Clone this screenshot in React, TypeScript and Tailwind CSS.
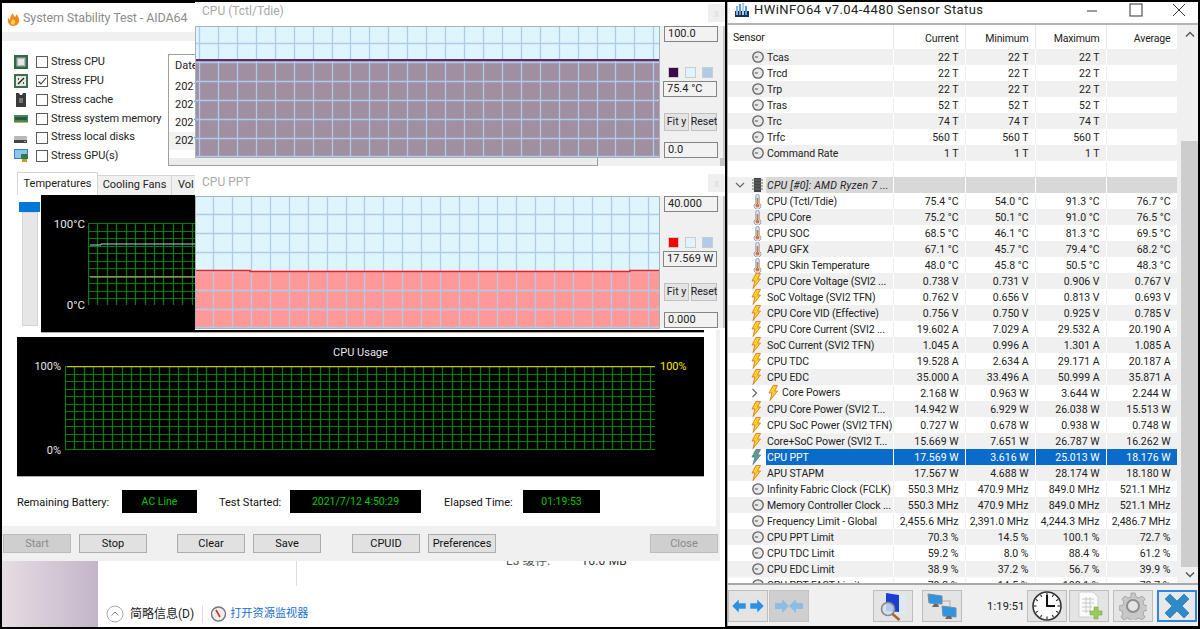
import React from "react";

const range = (n: number) => Array.from({ length: n }, (_, i) => i);

function GreenGrid({ w, h, yellow, children }: { w: number; h: number; yellow?: boolean; children?: React.ReactNode }) {
  const cols = Math.floor(w / 9.43);
  return (
    <svg width={w} height={h + 1} className="block shrink-0">
      {range(cols + 1).map((i) => (
        <line key={"v" + i} x1={Math.round(i * 9.43) + 0.5} x2={Math.round(i * 9.43) + 0.5} y1={0} y2={h} stroke="#008200" strokeWidth={1.2} />
      ))}
      {range(12).map((i) => (
        <line key={"h" + i} x1={0} x2={w} y1={Math.round(i * 7.5) + 0.5} y2={Math.round(i * 7.5) + 0.5} stroke="#008200" strokeWidth={1.2} />
      ))}
      {yellow && <line x1={2} x2={w} y1={0.5} y2={0.5} stroke="#c8c800" strokeWidth={1.6} />}
      {children}
    </svg>
  );
}

function BlueGrid({ h, startX, startY, level, line, fill, step }: { h: number; startX: number; startY: number; level: number; line: string; fill: string; step?: boolean }) {
  const w = 465;
  return (
    <svg width={w} height={h} className="block shrink-0">
      <rect width={w} height={h} fill="#dff5fe" />
      <rect y={level} width={w} height={h - level} fill={fill} />
      {range(25).map((i) => (
        <line key={"v" + i} x1={startX + Math.round(i * 18.93) + 0.5} x2={startX + Math.round(i * 18.93) + 0.5} y1={0} y2={h} stroke="#aecbea" strokeWidth={1.3} />
      ))}
      {range(7).map((i) => (
        <line key={"h" + i} x1={0} x2={w} y1={startY + Math.round(i * 18.9) + 0.5} y2={startY + Math.round(i * 18.9) + 0.5} stroke="#aecbea" strokeWidth={1.3} />
      ))}
      {step ? (
        <path d={`M0 ${level - 0.5}H55V${level + 0.5}H${w - 30}V${level - 0.5}H${w}`} fill="none" stroke={line} strokeWidth={1.4} />
      ) : (
        <line x1={0} x2={w} y1={level} y2={level} stroke={line} strokeWidth={2} />
      )}
      <rect x={0.5} y={0.5} width={w - 1} height={h - 1} fill="none" stroke="#a9b2b8" />
    </svg>
  );
}

function Field({ text, shift }: { text: string; shift?: boolean }) {
  return (
    <div className={`h-[16px] w-[54px] border border-[#858585] bg-[#f2f2f2] pl-[3px] text-[11px] leading-[14px] text-[#222] ${shift ? "ml-[3px]" : "ml-[4px]"}`}>
      {text}
    </div>
  );
}

function GraphWindow({ top, height, head, headPb, title, swatch, hi, value, lo, btnTop, children }: {
  top: string; height: string; head: string; headPb: string; title: string; swatch: string; hi: string; value: string; lo: string; btnTop: string; children: React.ReactNode;
}) {
  return (
    <section className={`absolute left-[195px] w-[530px] bg-white ${top} ${height}`}>
      <div className={`flex items-center pl-[7px] text-[12px] text-[#a8a8a8] ${head} ${headPb}`}>{title}</div>
      <div className={`absolute right-0 flex h-[18px] w-[17px] items-center justify-center bg-[#efefef] text-[10px] text-[#dcdcdc] ${btnTop}`}>x</div>
      <div className="flex">
        {children}
        <div className="flex h-[132px] flex-1 flex-col border-r-2 border-[#c8c8c8] bg-[#f0f0f0]">
          <Field text={hi} />
          <div className="ml-[8px] mt-[25px] flex gap-[6px]">
            <span className={`h-[11px] w-[11px] border border-[#ccc] ${swatch}`} />
            <span className="h-[11px] w-[11px] border border-[#ccc] bg-[#dff5fe]" />
            <span className="h-[11px] w-[11px] border border-[#ccc] bg-[#aecbea]" />
          </div>
          <div className="mt-[3px]"><Field text={value} shift /></div>
          <div className="ml-[4px] mt-[16px] flex gap-[2px] text-[10.5px] text-[#222]">
            <span className="flex h-[18px] w-[25px] items-center justify-center border border-[#c0c0c0] bg-[#e4e4e4]">Fit y</span>
            <span className="flex h-[18px] w-[26px] items-center justify-center border border-[#c0c0c0] bg-[#e4e4e4]">Reset</span>
          </div>
          <div className="mt-[11px]"><Field text={lo} /></div>
        </div>
      </div>
    </section>
  );
}

const Flame = () => (
  <svg width="15" height="16" viewBox="0 0 15 16" className="shrink-0">
    <path d="M2 7l2 2c0-3 1-5 3-7 0 2 1 3 2 4l2-3c1 3 3 5 2 8-1 3-4 4-6 4-3 0-6-3-5-8z" fill="#f08a1c" />
    <path d="M5 12c0-2 1-3 2-4 1 1 3 2 2 4-1 2-4 2-4 0z" fill="#ffd65a" />
  </svg>
);

const stressIcons: React.ReactNode[] = [
  <svg width="14" height="14" viewBox="0 0 14 14" key="a"><rect width="14" height="14" fill="#2f6a48" /><rect x="2.5" y="2.5" width="9" height="9" fill="#b5b5b5" /><rect x="4" y="4" width="6" height="6" fill="#e8e8e8" /></svg>,
  <svg width="14" height="14" viewBox="0 0 14 14" key="b"><rect width="14" height="14" fill="#3c7050" /><rect x="2" y="2" width="10" height="10" fill="#e8e8e0" /><path d="M4 10l6-6M4 5h1M9 9h1" stroke="#222" strokeWidth="1.4" /></svg>,
  <svg width="14" height="14" viewBox="0 0 14 14" key="c"><path d="M2 0h3l1 2h2l1-2h3v14H2z" fill="#3a3a3a" /><rect x="5" y="5" width="4" height="5" fill="#777" /></svg>,
  <svg width="14" height="14" viewBox="0 0 14 14" key="d"><rect y="3" width="14" height="8" fill="#3f8a5a" /><path d="M2 5v3M4 5v3M6 5v3M8 5v3M10 5v3M12 5v3" stroke="#222" /><rect y="10" width="14" height="1" fill="#c8b45a" /></svg>,
  <svg width="14" height="14" viewBox="0 0 14 14" key="e"><rect y="5" width="13" height="4" rx="1" fill="#b8b8b8" /><rect y="9" width="13" height="3" fill="#444" /><rect x="10" y="10" width="2" height="1" fill="#7c7" /></svg>,
  <svg width="15" height="14" viewBox="0 0 15 14" key="f"><rect width="14" height="10" fill="#3b7fc9" /><rect x="1" y="1" width="12" height="8" fill="#8cc4ee" /><rect x="7" y="5" width="7" height="5" fill="#2e7d43" /><rect x="8" y="10" width="5" height="3" fill="#c99a2e" /></svg>,
];

function Stress({ idx, label, checked }: { idx: number; label: string; checked?: boolean }) {
  return (
    <div className="flex h-[18.8px] items-center">
      <span className="flex w-[22px] shrink-0">{stressIcons[idx]}</span>
      <span className="flex h-[12px] w-[12px] shrink-0 items-center justify-center border border-[#5a5a5a] bg-white">
        {checked && (
          <svg width="10" height="10" viewBox="0 0 10 10"><path d="M1.5 5.5l2.5 2.5 5-6" fill="none" stroke="#333" strokeWidth="1.1" /></svg>
        )}
      </span>
      <span className="ml-[3px] whitespace-nowrap text-[11px] tracking-[-0.1px] text-[#222]">{label}</span>
    </div>
  );
}

function Btn({ label, off, cls }: { label: string; off?: boolean; cls?: string }) {
  return (
    <div className={`flex h-[19px] w-[68px] items-center justify-center border pt-[2px] text-[11px] ${off ? "border-[#bcbcbc] bg-[#cfcfcf] text-[#8a8a8a]" : "border-[#adadad] bg-[#e1e1e1] text-[#111]"} ${cls ?? ""}`}>
      {label}
    </div>
  );
}

function Led({ text, w }: { text: string; w: string }) {
  return <div className={`flex h-[23px] items-center justify-center bg-black text-[10.5px] text-[#00c800] ${w}`}>{text}</div>;
}

const Clock = () => (
  <svg width="12" height="12" viewBox="0 0 12 12"><circle cx="6" cy="6" r="5.2" fill="#e8e8e8" stroke="#5f5f5f" strokeWidth="1.3" /><path d="M2.8 6H6" stroke="#6a6a6a" strokeWidth="1.2" /></svg>
);
const Thermo = () => (
  <svg width="9" height="15" viewBox="0 0 9 15"><path d="M2.8 2a1.7 1.7 0 013.4 0v7a3.4 3.4 0 11-3.4 0z" fill="#dbe6f2" stroke="#8ba3c0" /><rect x="3.7" y="4" width="1.6" height="6" fill="#e8742a" /><circle cx="4.5" cy="11.5" r="2" fill="#e8742a" /></svg>
);
const Bolt = ({ cool }: { cool?: boolean }) => (
  <svg width="10" height="16" viewBox="0 0 10 16"><path d="M5 0.5h4.5L6.5 6h3L2 15.5 4 8H1z" fill={cool ? "#58a08c" : "#ffcf2e"} stroke={cool ? "#5a7a90" : "#e07a1a"} strokeWidth="0.9" /></svg>
);
const Chip = () => (
  <svg width="11" height="14" viewBox="0 0 11 14"><rect x="2" y="0" width="7" height="14" fill="#444" /><path d="M0 2h11M0 5h11M0 8h11M0 11h11" stroke="#666" /></svg>
);

type Kind = "c" | "t" | "b" | "p" | "n";
type Row = [string, string, string, string, string, Kind];
const rows: Row[] = [
  ["Tcas", "22 T", "22 T", "22 T", "", "c"],
  ["Trcd", "22 T", "22 T", "22 T", "", "c"],
  ["Trp", "22 T", "22 T", "22 T", "", "c"],
  ["Tras", "52 T", "52 T", "52 T", "", "c"],
  ["Trc", "74 T", "74 T", "74 T", "", "c"],
  ["Trfc", "560 T", "560 T", "560 T", "", "c"],
  ["Command Rate", "1 T", "1 T", "1 T", "", "c"],
  ["", "", "", "", "", "n"],
  ["CPU [#0]: AMD Ryzen 7 ...", "", "", "", "", "n"],
  ["CPU (Tctl/Tdie)", "75.4 °C", "54.0 °C", "91.3 °C", "76.7 °C", "t"],
  ["CPU Core", "75.2 °C", "50.1 °C", "91.0 °C", "76.5 °C", "t"],
  ["CPU SOC", "68.5 °C", "46.1 °C", "81.3 °C", "69.5 °C", "t"],
  ["APU GFX", "67.1 °C", "45.7 °C", "79.4 °C", "68.2 °C", "t"],
  ["CPU Skin Temperature", "48.0 °C", "45.8 °C", "50.5 °C", "48.3 °C", "t"],
  ["CPU Core Voltage (SVI2 ...", "0.738 V", "0.731 V", "0.906 V", "0.767 V", "b"],
  ["SoC Voltage (SVI2 TFN)", "0.762 V", "0.656 V", "0.813 V", "0.693 V", "b"],
  ["CPU Core VID (Effective)", "0.756 V", "0.750 V", "0.925 V", "0.785 V", "b"],
  ["CPU Core Current (SVI2 ...", "19.602 A", "7.029 A", "29.532 A", "20.190 A", "b"],
  ["SoC Current (SVI2 TFN)", "1.045 A", "0.996 A", "1.301 A", "1.085 A", "b"],
  ["CPU TDC", "19.528 A", "2.634 A", "29.171 A", "20.187 A", "b"],
  ["CPU EDC", "35.000 A", "33.496 A", "50.999 A", "35.871 A", "b"],
  ["Core Powers", "2.168 W", "0.963 W", "3.644 W", "2.244 W", "b"],
  ["CPU Core Power (SVI2 T...", "14.942 W", "6.929 W", "26.038 W", "15.513 W", "b"],
  ["CPU SoC Power (SVI2 TFN)", "0.727 W", "0.678 W", "0.938 W", "0.748 W", "b"],
  ["Core+SoC Power (SVI2 T...", "15.669 W", "7.651 W", "26.787 W", "16.262 W", "b"],
  ["CPU PPT", "17.569 W", "3.616 W", "25.013 W", "18.176 W", "p"],
  ["APU STAPM", "17.567 W", "4.688 W", "28.174 W", "18.180 W", "b"],
  ["Infinity Fabric Clock (FCLK)", "550.3 MHz", "470.9 MHz", "849.0 MHz", "521.1 MHz", "c"],
  ["Memory Controller Clock ...", "550.3 MHz", "470.9 MHz", "849.0 MHz", "521.1 MHz", "c"],
  ["Frequency Limit - Global", "2,455.6 MHz", "2,391.0 MHz", "4,244.3 MHz", "2,486.7 MHz", "c"],
  ["CPU PPT Limit", "70.3 %", "14.5 %", "100.1 %", "72.7 %", "c"],
  ["CPU TDC Limit", "59.2 %", "8.0 %", "88.4 %", "61.2 %", "c"],
  ["CPU EDC Limit", "38.9 %", "37.2 %", "56.7 %", "39.9 %", "c"],
  ["CPU PPT FAST Limit", "70.3 %", "14.5 %", "100.1 %", "72.7 %", "c"],
];

const colW = ["w-[72px]", "w-[70px]", "w-[71px]", "w-[71px]"];

function SensorRow({ row, i }: { row: Row; i: number }) {
  const [name, a, b, c, d, kind] = row;
  const sel = kind === "p";
  const group = i === 8;
  const powers = i === 21;
  const stripe = i % 2 === 0 ? "bg-[#f0f0f0]" : "bg-white";
  const sep = i % 2 === 0 ? "border-white" : "border-[#f0f0f0]";
  const cellBg = sel ? "bg-[#0a6cc8] text-white" : group ? "bg-[#d8d8d8]" : "";
  return (
    <div className={`flex h-[16px] shrink-0 items-center text-[10.5px] leading-[18px] text-[#222] ${stripe}`}>
      <div className="flex h-full w-[38px] shrink-0 items-center justify-end pr-[2px]">
        {group && <svg width="10" height="8" viewBox="0 0 10 8" className="mr-[7px]"><path d="M1 2l4 4 4-4" fill="none" stroke="#666" strokeWidth="1.2" /></svg>}
        {group && <span className="mr-[1px]"><Chip /></span>}
        {kind === "c" && <Clock />}
        {kind === "t" && <span className="mr-[2px] flex"><Thermo /></span>}
        {(kind === "b" || sel) && !powers && <span className="mr-[3px] flex"><Bolt cool={sel} /></span>}
        {powers && <svg width="7" height="10" viewBox="0 0 7 10" className="mr-[6px]"><path d="M1.5 1l4 4-4 4" fill="none" stroke="#666" strokeWidth="1.2" /></svg>}
      </div>
      <div className={`h-full w-[127px] shrink-0 overflow-hidden whitespace-nowrap ${cellBg} ${group ? "italic tracking-[0.25px]" : "tracking-[-0.1px]"}`}>
        {powers ? (
          <span className="flex h-full items-center"><span className="flex w-[16px] pl-[2px]"><Bolt /></span><span>{name}</span></span>
        ) : (
          <span className="pl-[1px]">{name}</span>
        )}
      </div>
      {[a, b, c, d].map((v, k) => (
        <div key={k} className={`h-full shrink-0 overflow-hidden border-l pr-[6.5px] text-right ${colW[k]} ${sel ? "border-white" : sep} ${cellBg}`}>
          {v}
        </div>
      ))}
    </div>
  );
}

function Tool({ children, off, active }: { children: React.ReactNode; off?: boolean; active?: boolean }) {
  return (
    <div className={`flex h-[32px] w-[40px] shrink-0 items-center justify-center border ${active ? "border-2 border-[#2f86dc] bg-[#e8e8e8]" : off ? "border-[#c4c4c4] bg-[#cfcfcf]" : "border-[#bdbdbd] bg-[#e4e4e4]"}`}>
      {children}
    </div>
  );
}

export default function App() {
  return (
    <div className="relative h-[629px] w-[1200px] overflow-hidden bg-black" style={{ fontFamily: "Roboto, 'Noto Sans CJK SC', sans-serif" }}>
      {/* window behind */}
      <section className="absolute left-[2px] top-[158px] flex h-[469px] w-[723px] flex-col">
        <div className="h-[8px] shrink-0 bg-[#c4c4c4]" />
        <div className="flex flex-1">
          <div className="w-[96px] shrink-0 bg-linear-to-r from-[#e6dde2] to-[#c3b5c9]" />
          <div className="flex flex-1 flex-col bg-white">
            <div className="flex h-[420px]">
              <div className="w-[199px] border-r border-[#dcdcdc]" />
              <div className="flex gap-[31px] pl-[209px] pt-[388px] text-[12px] leading-[14px] tracking-[0.2px] text-[#555]">
                <span>L3 缓存:</span>
                <span className="text-[#333]">16.0 MB</span>
              </div>
            </div>
            <div className="ml-[8px] mt-[18px] flex h-[20px] items-center text-[12px]">
              <svg width="18" height="18" viewBox="0 0 18 18"><circle cx="9" cy="9" r="8" fill="none" stroke="#aaa" /><path d="M5.5 10.5L9 7l3.5 3.5" fill="none" stroke="#888" /></svg>
              <span className="ml-[6px] text-[#222]">简略信息(D)</span>
              <span className="ml-[8px] h-[18px] border-l border-[#ddd]" />
              <svg width="15" height="16" viewBox="0 0 15 16" className="ml-[8px]"><circle cx="7.5" cy="8" r="7" fill="#eee" stroke="#777" strokeWidth="1.4" /><path d="M5 4l4 7" stroke="#c8322a" strokeWidth="1.6" /></svg>
              <span className="ml-[4px] text-[11.2px] text-[#1a6fd0]">打开资源监视器</span>
            </div>
          </div>
        </div>
      </section>

      {/* AIDA64 */}
      <section className="absolute left-[2px] top-[3px] flex h-[558px] w-[718px] flex-col bg-[#f0f0f0]">
        <div className="flex h-[29px] shrink-0 items-center bg-white pl-[4px] pt-[2px] text-[12.5px] tracking-[-0.1px] text-[#8c8c8c]">
          <Flame />
          <span className="ml-[2px]">System Stability Test - AIDA64</span>
        </div>
        <div className="h-[9px] shrink-0" />
        <div className="mr-[4px] flex h-[485px] flex-col bg-white">
          <div className="flex h-[125px] shrink-0">
            <div className="w-[166px] shrink-0 pl-[12px] pt-[12px]">
              <Stress idx={0} label="Stress CPU" />
              <Stress idx={1} label="Stress FPU" checked />
              <Stress idx={2} label="Stress cache" />
              <Stress idx={3} label="Stress system memory" />
              <Stress idx={4} label="Stress local disks" />
              <Stress idx={5} label="Stress GPU(s)" />
            </div>
            <div className="mt-[13px] flex h-[112px] w-[430px] shrink-0 flex-col border border-[#a0a0a0] text-[11px] leading-[18px] text-[#222]">
              <div className="h-[23px] pl-[6px] pt-[2px]">Date</div>
              <div className="h-[18px] pl-[6px]">2021</div>
              <div className="h-[18px] pl-[6px]">2021</div>
              <div className="h-[18px] pl-[6px]">2021</div>
              <div className="h-[18px] bg-[#f2f2f2] pl-[6px]">2021</div>
              <div className="mt-auto h-[7px] bg-[#ececec]" />
            </div>
            <div className="h-[8px] flex-1 self-end bg-[#f0f0f0]" />
          </div>
          <div className="ml-[15px] mt-[6px] flex h-[23px] shrink-0 items-end text-[11px] text-[#222]">
            <div className="flex h-[23px] w-[81px] items-center justify-center border border-b-0 border-[#d5d5d5] bg-white">Temperatures</div>
            <div className="flex h-[20px] w-[74px] items-center justify-center border-r border-t border-[#d5d5d5] bg-[#f0f0f0]">Cooling Fans</div>
            <div className="flex h-[20px] w-[60px] items-center border-r border-t border-[#d5d5d5] bg-[#f0f0f0] pl-[6px]">Vol</div>
          </div>
          <div className="ml-[17px] flex h-[138px] w-[685px] shrink-0">
            <div className="flex w-[22px] shrink-0 flex-col pt-[7px]">
              <div className="h-[10px] w-[21px] bg-[#0078d7]" />
              <div className="ml-[3px] h-[114px] w-[16px] border border-[#d4d4d4] bg-[#e6e6e6]" />
            </div>
            <div className="flex flex-1 border-b border-[#aaa] bg-black pt-[28px] text-[11.5px] text-[#e8e8e8]">
              <div className="flex h-[94px] w-[44px] shrink-0 flex-col justify-between pb-[3px] text-right">
                <span className="-mt-[7px]">100°C</span>
                <span>0°C</span>
              </div>
              <div className="ml-[3px]">
                <GreenGrid w={560} h={82}>
                  <path d="M2 22H13V21H560" fill="none" stroke="#a8dcec" />
                  <line x1="2" x2="560" y1="54" y2="54" stroke="#e0bc8c" />
                </GreenGrid>
              </div>
            </div>
          </div>
          <div className="ml-[15px] mt-[4px] flex h-[140px] w-[687px] shrink-0 flex-col border-b border-[#aaa] bg-black text-[11px] text-[#e8e8e8]">
            <div className="h-[29px] pt-[8px] text-center">CPU Usage</div>
            <div className="flex">
              <div className="flex h-[93px] w-[44px] shrink-0 flex-col justify-between text-right">
                <span className="-mt-[7px]">100%</span>
                <span>0%</span>
              </div>
              <div className="ml-[4px]"><GreenGrid w={590} h={83} yellow /></div>
              <span className="-mt-[7px] ml-[5px] h-[16px] text-[#ffe600]">100%</span>
            </div>
          </div>
          <div className="ml-[15px] mt-[13px] flex h-[23px] shrink-0 items-center text-[11px] text-[#111]">
            <span className="w-[105px] pt-[3px]">Remaining Battery:</span>
            <Led text="AC Line" w="w-[75px]" />
            <span className="ml-[22px] w-[71px] pt-[3px]">Test Started:</span>
            <Led text="2021/7/12 4:50:29" w="w-[131px]" />
            <span className="ml-[23px] w-[79px] pt-[3px]">Elapsed Time:</span>
            <Led text="01:19:53" w="w-[77px]" />
          </div>
        </div>
        <div className="flex flex-1 items-start pl-[1px] pr-[2px] pt-[8px]">
          <Btn label="Start" off />
          <Btn label="Stop" cls="ml-[8px]" />
          <Btn label="Clear" cls="ml-[30px]" />
          <Btn label="Save" cls="ml-[8px]" />
          <Btn label="CPUID" cls="ml-[31px]" />
          <Btn label="Preferences" cls="ml-[8px]" />
          <Btn label="Close" off cls="ml-auto" />
        </div>
      </section>

      <GraphWindow top="top-[2px]" height="h-[156px]" head="h-[24px]" headPb="pb-[6px]" title="CPU (Tctl/Tdie)" swatch="bg-[#3c0a4a]" hi="100.0" value="75.4 °C" lo="0.0" btnTop="top-[2px]">
        <BlueGrid h={132} startX={4} startY={17} level={34} line="#5c2c6c" fill="#a08fa0" />
      </GraphWindow>
      <GraphWindow top="top-[166px]" height="h-[164px]" head="h-[30px]" headPb="pt-[1px]" title="CPU PPT" swatch="bg-[#ff0000]" hi="40.000" value="17.569 W" lo="0.000" btnTop="top-[8px]">
        <BlueGrid h={133} startX={18} startY={18} level={75} line="#ff1a1a" fill="#ff9999" step />
      </GraphWindow>

      {/* HWiNFO */}
      <section className="absolute left-[727px] top-[2px] flex h-[624px] w-[471px] flex-col border-l border-[#b0b0b0] bg-white">
        <div className="flex h-[23px] shrink-0 items-center border-b-2 border-[#b4b4b4] pb-[5px] pl-[7px]">
          <svg width="14" height="14" viewBox="0 0 14 14" className="shrink-0"><rect y="8" width="14" height="6" fill="#1d2f4a" /><rect x="1" y="3" width="2" height="9" fill="#7fb2e6" /><rect x="4" y="1" width="2" height="11" fill="#5f9ad8" /><rect x="7" y="0" width="2" height="12" fill="#a8cdf0" /><rect x="10" y="3" width="2" height="9" fill="#5f9ad8" /></svg>
          <span className="ml-[5px] whitespace-nowrap text-[13px] tracking-[0.42px] text-[#222]">HWiNFO64 v7.04-4480 Sensor Status</span>
          <div className="ml-auto flex items-center pr-[12px]">
            <svg width="11" height="11" viewBox="0 0 11 11"><path d="M0 6h10" stroke="#555" strokeWidth="1.2" /></svg>
            <svg width="14" height="14" viewBox="0 0 14 14" className="ml-[31px]"><rect x="1" y="1" width="12" height="12" fill="none" stroke="#333" /></svg>
            <svg width="14" height="14" viewBox="0 0 14 14" className="ml-[29px]"><path d="M1 1l12 12M13 1L1 13" stroke="#333" /></svg>
          </div>
        </div>
        <div className="flex h-[558px] shrink-0">
          <div className="flex w-[449px] shrink-0 flex-col overflow-hidden">
            <div className="flex h-[24px] shrink-0 items-center text-[10.5px] tracking-[-0.15px] text-[#222]">
              <div className="w-[165px] shrink-0 pl-[5px] pt-[2px]">Sensor</div>
              {["Current", "Minimum", "Maximum", "Average"].map((h, k) => (
                <div key={h} className={`h-full border-l border-[#e6e6e6] pr-[6.5px] pt-[6px] text-right ${colW[k]}`}>{h}</div>
              ))}
            </div>
            {rows.map((r, i) => (
              <SensorRow key={i} row={r} i={i} />
            ))}
          </div>
          <div className="flex flex-1 flex-col bg-[#f0f0f0]">
            <div className="flex h-[116px] justify-center pl-[4px] pt-[6px]">
              <svg width="10" height="7" viewBox="0 0 10 7"><path d="M1 5.5L5 1.5l4 4" fill="none" stroke="#555" strokeWidth="1.4" /></svg>
            </div>
            <div className="ml-[4px] h-[426px] bg-[#cdcdcd]" />
            <div className="flex flex-1 justify-center pl-[4px] pt-[4px]">
              <svg width="10" height="7" viewBox="0 0 10 7"><path d="M1 1.5l4 4 4-4" fill="none" stroke="#555" strokeWidth="1.4" /></svg>
            </div>
          </div>
        </div>
        <div className="flex flex-1 items-start border-t-2 border-[#a8a8a8] bg-[#f0f0f0] pt-[5px]">
          <Tool>
            <svg width="34" height="16" viewBox="0 0 34 16"><path d="M1 8l7-7v4h7v6H8v4z" fill="#2f8fe0" stroke="#cfe4f6" strokeWidth=".6" /><path d="M33 8l-7-7v4h-7v6h7v4z" fill="#2f8fe0" stroke="#cfe4f6" strokeWidth=".6" /></svg>
          </Tool>
          <span className="ml-[1px]" />
          <Tool off>
            <svg width="30" height="16" viewBox="0 0 30 16"><path d="M15 8l-7-7v4H1v6h7v4z" fill="#8ebde4" /><path d="M15 8l7-7v4h7v6h-7v4z" fill="#8ebde4" /></svg>
          </Tool>
          <span className="ml-[64px]" />
          <Tool>
            <svg width="32" height="30" viewBox="0 0 32 30"><path d="M9 2l20 3v18L9 20z" fill="#dfe9f6" /><path d="M9 2l13 2v17L9 20z" fill="#1a3fd0" /><circle cx="11" cy="18" r="6.5" fill="#cfe0f0" fillOpacity=".85" stroke="#8a8a8a" strokeWidth="1.6" /><path d="M15.5 23l7 6" stroke="#a5682a" strokeWidth="2.6" /></svg>
          </Tool>
          <span className="ml-[9px]" />
          <Tool>
            <svg width="32" height="30" viewBox="0 0 32 30"><path d="M14 10h10v6" fill="none" stroke="#c8c8c8" strokeWidth="2" /><path d="M2 3l14 2v8L3 12z" fill="#2f94e4" stroke="#7a8a98" /><path d="M8 13l-2 3h7l-1-3z" fill="#6a6a6a" /><path d="M16 15l14 2v9l-13-1z" fill="#2f94e4" stroke="#7a8a98" /><path d="M21 25l-2 3h7l-1-3z" fill="#6a6a6a" /></svg>
          </Tool>
          <span className="flex w-[65px] shrink-0 pl-[25px] pt-[9px] text-[11px] tracking-[0.2px] text-[#222]">1:19:51</span>
          <Tool>
            <svg width="32" height="30" viewBox="0 0 32 30"><circle cx="16" cy="15" r="14" fill="#fff" stroke="#333" strokeWidth="1.6" />{range(12).map((i) => { const a = (i * Math.PI) / 6; return <line key={i} x1={16 + 10.5 * Math.sin(a)} y1={15 - 10.5 * Math.cos(a)} x2={16 + 13 * Math.sin(a)} y2={15 - 13 * Math.cos(a)} stroke="#333" strokeWidth="1.2" />; })}<path d="M16 4v11h8" fill="none" stroke="#111" strokeWidth="2" /></svg>
          </Tool>
          <span className="ml-[2px]" />
          <Tool>
            <svg width="30" height="30" viewBox="0 0 30 30"><path d="M5 1h14l5 5v20H5z" fill="#fbfbfb" stroke="#cfcfcf" /><path d="M8 8h12M8 12h12M8 16h10M8 20h8M12 6v16M16 6v16" stroke="#c8c8c8" /><path d="M20 16h4v4h4v4h-4v4h-4v-4h-4v-4h4z" fill="#9cc95a" stroke="#7aa83c" strokeWidth=".6" /></svg>
          </Tool>
          <span className="ml-[4px]" />
          <Tool>
            <svg width="28" height="28" viewBox="0 0 28 28"><path d="M12 1h4l1 4 3 1 3-2 3 3-2 3 1 3 4 1v4l-4 1-1 3 2 3-3 3-3-2-3 1-1 3h-4l-1-3-3-1-3 2-3-3 2-3-1-3-3-1v-4l4-1 1-3-2-3 3-3 3 2 3-1z" fill="#c8c8c8" stroke="#a8a8a8" /><circle cx="14" cy="14" r="6" fill="#e4e4e4" stroke="#8e8e8e" strokeWidth="2" /></svg>
          </Tool>
          <span className="ml-[4px]" />
          <Tool active>
            <svg width="26" height="26" viewBox="0 0 26 26"><path d="M6 1l7 7 7-7 5 5-7 7 7 7-5 5-7-7-7 7-5-5 7-7-7-7z" fill="#2f8bc8" stroke="#1f6fa8" strokeWidth=".6" /></svg>
          </Tool>
        </div>
      </section>
    </div>
  );
}
